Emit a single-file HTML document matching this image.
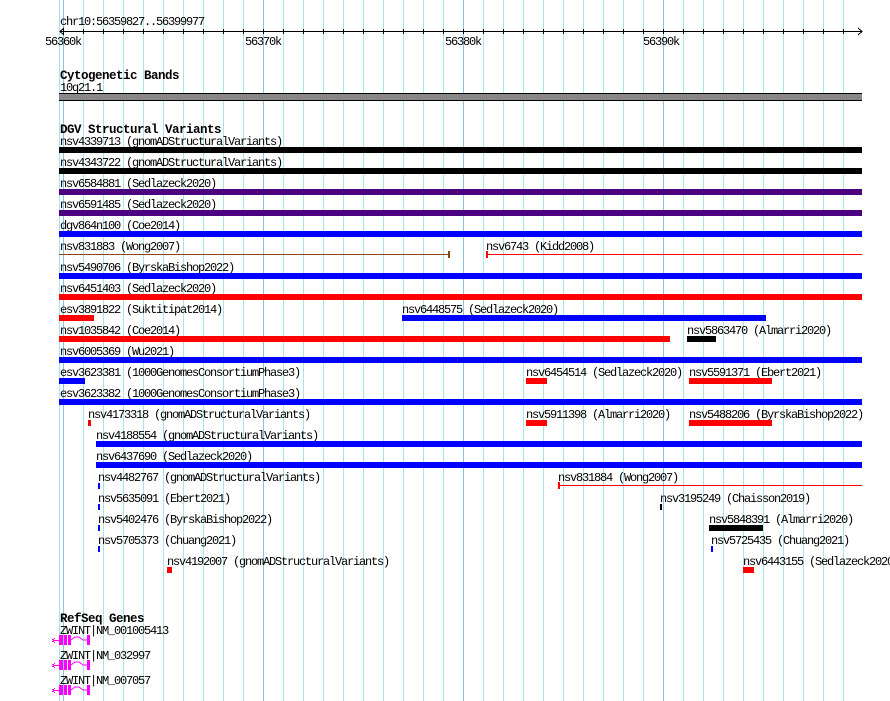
<!DOCTYPE html>
<html><head><meta charset="utf-8"><style>
html,body{margin:0;padding:0;background:#fff;width:890px;height:701px;overflow:hidden}
svg{display:block}
text{font-family:"Liberation Mono",monospace;font-size:12px;letter-spacing:-1.2px;fill:#000}
.b{font-weight:bold;font-size:12.5px;letter-spacing:-0.5px}
</style></head><body>
<svg width="890" height="701" viewBox="0 0 890 701" xmlns="http://www.w3.org/2000/svg" shape-rendering="crispEdges">
<g stroke="#a8e4ee" stroke-width="1">
<line x1="59.5" y1="0" x2="59.5" y2="701"/>
<line x1="83.5" y1="0" x2="83.5" y2="701"/><line x1="103.5" y1="0" x2="103.5" y2="701"/><line x1="123.5" y1="0" x2="123.5" y2="701"/><line x1="143.5" y1="0" x2="143.5" y2="701"/><line x1="163.5" y1="0" x2="163.5" y2="701"/><line x1="183.5" y1="0" x2="183.5" y2="701"/><line x1="203.5" y1="0" x2="203.5" y2="701"/><line x1="223.5" y1="0" x2="223.5" y2="701"/><line x1="243.5" y1="0" x2="243.5" y2="701"/>
<line x1="283.5" y1="0" x2="283.5" y2="701"/><line x1="303.5" y1="0" x2="303.5" y2="701"/><line x1="323.5" y1="0" x2="323.5" y2="701"/><line x1="343.5" y1="0" x2="343.5" y2="701"/><line x1="363.5" y1="0" x2="363.5" y2="701"/><line x1="383.5" y1="0" x2="383.5" y2="701"/><line x1="403.5" y1="0" x2="403.5" y2="701"/><line x1="423.5" y1="0" x2="423.5" y2="701"/><line x1="443.5" y1="0" x2="443.5" y2="701"/>
<line x1="483.5" y1="0" x2="483.5" y2="701"/><line x1="503.5" y1="0" x2="503.5" y2="701"/><line x1="523.5" y1="0" x2="523.5" y2="701"/><line x1="543.5" y1="0" x2="543.5" y2="701"/><line x1="563.5" y1="0" x2="563.5" y2="701"/><line x1="583.5" y1="0" x2="583.5" y2="701"/><line x1="603.5" y1="0" x2="603.5" y2="701"/><line x1="623.5" y1="0" x2="623.5" y2="701"/><line x1="643.5" y1="0" x2="643.5" y2="701"/>
<line x1="683.5" y1="0" x2="683.5" y2="701"/><line x1="703.5" y1="0" x2="703.5" y2="701"/><line x1="723.5" y1="0" x2="723.5" y2="701"/><line x1="743.5" y1="0" x2="743.5" y2="701"/><line x1="763.5" y1="0" x2="763.5" y2="701"/><line x1="783.5" y1="0" x2="783.5" y2="701"/><line x1="803.5" y1="0" x2="803.5" y2="701"/><line x1="823.5" y1="0" x2="823.5" y2="701"/><line x1="843.5" y1="0" x2="843.5" y2="701"/>
</g>
<g stroke="#88c4e4" stroke-width="1">
<line x1="63.5" y1="0" x2="63.5" y2="701"/><line x1="263.5" y1="0" x2="263.5" y2="701"/><line x1="463.5" y1="0" x2="463.5" y2="701"/><line x1="663.5" y1="0" x2="663.5" y2="701"/>
</g>
<text x="60" y="25">chr10:56359827..56399977</text>
<g stroke="#000" stroke-width="1" fill="none">
<line x1="60" y1="31.5" x2="862" y2="31.5"/>
<polyline points="64,28 60,31.5 64,35"/>
<polyline points="858,28 862,31.5 858,35"/>
<path d="M63.5 29v5M83.5 29v5M103.5 29v5M123.5 29v5M143.5 29v5M163.5 29v5M183.5 29v5M203.5 29v5M223.5 29v5M243.5 29v5M263.5 29v5M283.5 29v5M303.5 29v5M323.5 29v5M343.5 29v5M363.5 29v5M383.5 29v5M403.5 29v5M423.5 29v5M443.5 29v5M463.5 29v5M483.5 29v5M503.5 29v5M523.5 29v5M543.5 29v5M563.5 29v5M583.5 29v5M603.5 29v5M623.5 29v5M643.5 29v5M663.5 29v5M683.5 29v5M703.5 29v5M723.5 29v5M743.5 29v5M763.5 29v5M783.5 29v5M803.5 29v5M823.5 29v5M843.5 29v5"/>
</g>
<text x="45" y="45">56360k</text><text x="245" y="45">56370k</text><text x="445" y="45">56380k</text><text x="643" y="45">56390k</text>
<text class="b" x="60" y="79">Cytogenetic Bands</text>
<text x="60" y="91">10q21.1</text>
<rect x="59" y="93" width="803" height="8" fill="#000"/>
<rect x="59" y="94" width="803" height="6" fill="#888"/>
<text class="b" x="60" y="133">DGV Structural Variants</text>
<g transform="translate(0,1)">
<text x="60" y="144">nsv4339713 (gnomADStructuralVariants)</text>
<text x="60" y="165">nsv4343722 (gnomADStructuralVariants)</text>
<text x="60" y="186">nsv6584881 (Sedlazeck2020)</text>
<text x="60" y="207">nsv6591485 (Sedlazeck2020)</text>
<text x="60" y="228">dgv864n100 (Coe2014)</text>
<text x="60" y="249">nsv831883 (Wong2007)</text>
<text x="486" y="249">nsv6743 (Kidd2008)</text>
<text x="60" y="270">nsv5490706 (ByrskaBishop2022)</text>
<text x="60" y="291">nsv6451403 (Sedlazeck2020)</text>
<text x="60" y="312">esv3891822 (Suktitipat2014)</text>
<text x="402" y="312">nsv6448575 (Sedlazeck2020)</text>
<text x="60" y="333">nsv1035842 (Coe2014)</text>
<text x="687" y="333">nsv5863470 (Almarri2020)</text>
<text x="60" y="354">nsv6005369 (Wu2021)</text>
<text x="60" y="375">esv3623381 (1000GenomesConsortiumPhase3)</text>
<text x="526" y="375">nsv6454514 (Sedlazeck2020)</text>
<text x="689" y="375">nsv5591371 (Ebert2021)</text>
<text x="60" y="396">esv3623382 (1000GenomesConsortiumPhase3)</text>
<text x="88" y="417">nsv4173318 (gnomADStructuralVariants)</text>
<text x="526" y="417">nsv5911398 (Almarri2020)</text>
<text x="689" y="417">nsv5488206 (ByrskaBishop2022)</text>
<text x="96" y="438">nsv4188554 (gnomADStructuralVariants)</text>
<text x="96" y="459">nsv6437690 (Sedlazeck2020)</text>
<text x="98" y="480">nsv4482767 (gnomADStructuralVariants)</text>
<text x="558" y="480">nsv831884 (Wong2007)</text>
<text x="98" y="501">nsv5635091 (Ebert2021)</text>
<text x="660" y="501">nsv3195249 (Chaisson2019)</text>
<text x="98" y="522">nsv5402476 (ByrskaBishop2022)</text>
<text x="709" y="522">nsv5848391 (Almarri2020)</text>
<text x="98" y="543">nsv5705373 (Chuang2021)</text>
<text x="711" y="543">nsv5725435 (Chuang2021)</text>
<text x="167" y="564">nsv4192007 (gnomADStructuralVariants)</text>
<text x="743" y="564">nsv6443155 (Sedlazeck2020)</text>
</g>
<rect x="59" y="147" width="803" height="6" fill="#000"/>
<rect x="59" y="168" width="803" height="6" fill="#000"/>
<rect x="59" y="189" width="803" height="6" fill="#4b0082"/>
<rect x="59" y="210" width="803" height="6" fill="#4b0082"/>
<rect x="59" y="231" width="803" height="6" fill="#00f"/>
<rect x="59" y="254" width="391" height="1" fill="#8b4513"/><rect x="448" y="251" width="2" height="7" fill="#8b4513"/>
<rect x="487" y="254" width="375" height="1" fill="#f00"/><rect x="486" y="251" width="2" height="7" fill="#f00"/>
<rect x="59" y="273" width="803" height="6" fill="#00f"/>
<rect x="59" y="294" width="803" height="6" fill="#f00"/>
<rect x="59" y="315" width="35" height="6" fill="#f00"/>
<rect x="402" y="315" width="364" height="6" fill="#00f"/>
<rect x="59" y="336" width="611" height="6" fill="#f00"/>
<rect x="687" y="336" width="29" height="6" fill="#000"/>
<rect x="59" y="357" width="803" height="6" fill="#00f"/>
<rect x="59" y="378" width="26" height="6" fill="#00f"/>
<rect x="526" y="378" width="21" height="6" fill="#f00"/>
<rect x="689" y="378" width="83" height="6" fill="#f00"/>
<rect x="59" y="399" width="803" height="6" fill="#00f"/>
<rect x="88" y="420" width="3" height="6" fill="#f00"/>
<rect x="526" y="420" width="21" height="6" fill="#f00"/>
<rect x="689" y="420" width="83" height="6" fill="#f00"/>
<rect x="96" y="441" width="766" height="6" fill="#00f"/>
<rect x="96" y="462" width="766" height="6" fill="#00f"/>
<rect x="98" y="483" width="2" height="6" fill="#00f"/>
<rect x="558" y="485" width="304" height="1" fill="#f00"/><rect x="558" y="482" width="2" height="7" fill="#f00"/>
<rect x="98" y="504" width="2" height="6" fill="#00f"/>
<rect x="660" y="504" width="2" height="6" fill="#000"/>
<rect x="98" y="525" width="2" height="6" fill="#00f"/>
<rect x="709" y="525" width="54" height="6" fill="#000"/>
<rect x="98" y="546" width="2" height="6" fill="#00f"/>
<rect x="711" y="546" width="2" height="6" fill="#00f"/>
<rect x="167" y="567" width="5" height="6" fill="#f00"/>
<rect x="743" y="567" width="11" height="6" fill="#f00"/>
<text class="b" x="60" y="622">RefSeq Genes</text>
<g>
<text x="60" y="634">ZWINT|NM_001005413</text>
<g fill="#f0f"><rect x="53" y="640" width="7" height="1"/><rect x="52" y="639" width="2" height="1"/><rect x="52" y="641" width="2" height="1"/><rect x="54" y="638" width="1" height="1"/><rect x="54" y="642" width="1" height="1"/><rect x="59" y="635" width="4" height="10"/><rect x="64" y="635" width="3" height="10"/><rect x="68" y="635" width="3" height="10"/><rect x="87" y="635" width="3" height="10"/></g>
<polyline points="71,640 75,637 79,637 83,640 87,640" fill="none" stroke="#f0f" stroke-width="1" shape-rendering="auto"/>
</g>
<g transform="translate(0,25)">
<text x="60" y="634">ZWINT|NM_032997</text>
<g fill="#f0f"><rect x="53" y="640" width="7" height="1"/><rect x="52" y="639" width="2" height="1"/><rect x="52" y="641" width="2" height="1"/><rect x="54" y="638" width="1" height="1"/><rect x="54" y="642" width="1" height="1"/><rect x="59" y="635" width="4" height="10"/><rect x="64" y="635" width="3" height="10"/><rect x="68" y="635" width="3" height="10"/><rect x="87" y="635" width="3" height="10"/></g>
<polyline points="71,640 75,637 79,637 83,640 87,640" fill="none" stroke="#f0f" stroke-width="1" shape-rendering="auto"/>
</g>
<g transform="translate(0,50)">
<text x="60" y="634">ZWINT|NM_007057</text>
<g fill="#f0f"><rect x="53" y="640" width="7" height="1"/><rect x="52" y="639" width="2" height="1"/><rect x="52" y="641" width="2" height="1"/><rect x="54" y="638" width="1" height="1"/><rect x="54" y="642" width="1" height="1"/><rect x="59" y="635" width="4" height="10"/><rect x="64" y="635" width="3" height="10"/><rect x="68" y="635" width="3" height="10"/><rect x="87" y="635" width="3" height="10"/></g>
<polyline points="71,640 75,637 79,637 83,640 87,640" fill="none" stroke="#f0f" stroke-width="1" shape-rendering="auto"/>
</g>
</svg>
</body></html>
